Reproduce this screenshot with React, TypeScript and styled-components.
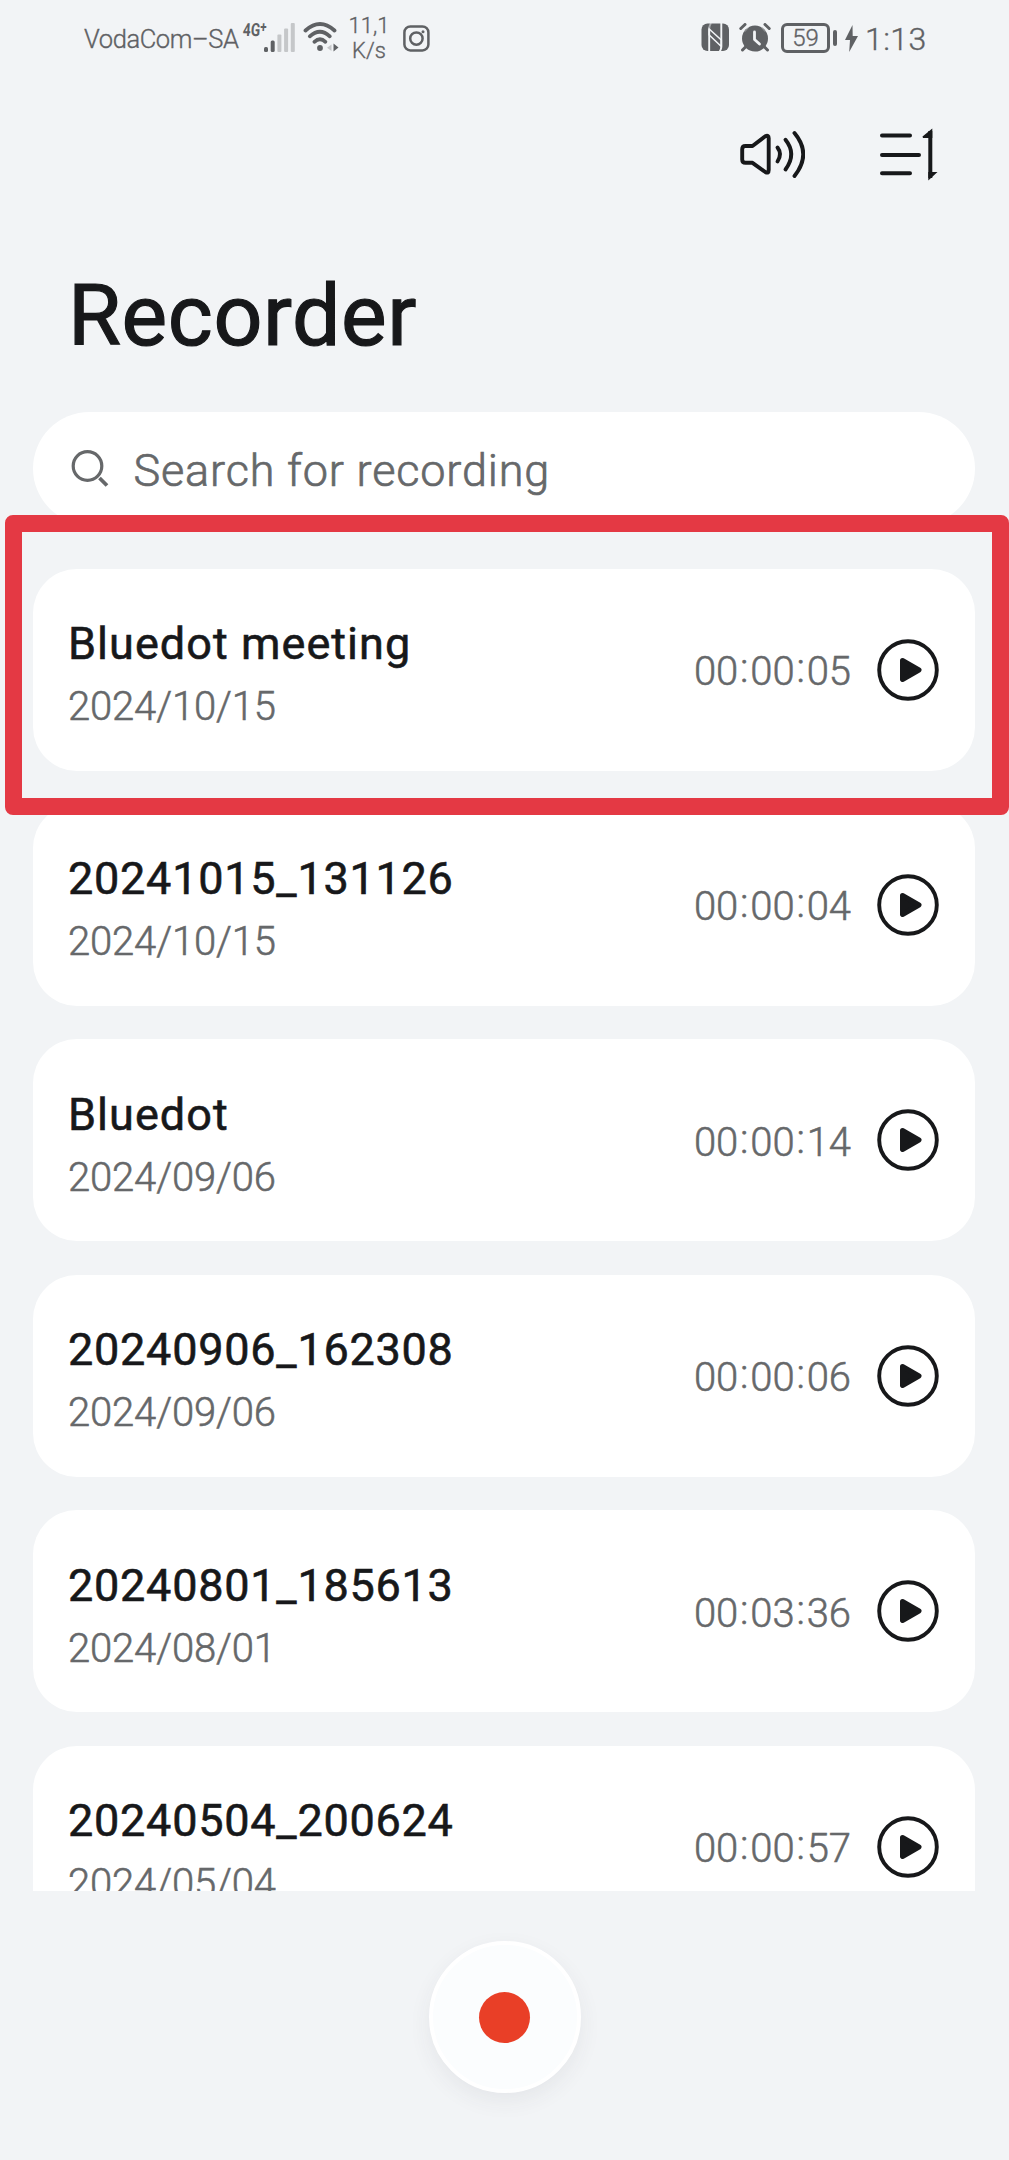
import React from "react";
import styled, { createGlobalStyle } from "styled-components";

const GlobalStyle = createGlobalStyle`
  * { box-sizing: border-box; }
  body {
    margin: 0;
    background: #f2f4f6;
    font-family: Roboto, "Noto Sans", sans-serif;
    color: #17181a;
  }
`;

const Screen = styled.main`
  width: 1009px;
  height: 2160px;
  overflow: hidden;
  display: flex;
  flex-direction: column;
  background: #f2f4f6;
`;

const StatusBar = styled.header`
  height: 76px;
  flex: none;
  display: flex;
  justify-content: space-between;
  padding: 0 82px 0 84px;
  color: #5f6164;
`;

const StatusGroup = styled.div`
  display: flex;
  align-items: flex-start;
`;

const Slot = styled.div<{ $top: number; $width: number; $gap?: number }>`
  flex: none;
  width: ${(p) => p.$width}px;
  margin-top: ${(p) => p.$top}px;
  margin-left: ${(p) => p.$gap ?? 0}px;
  white-space: nowrap;
  svg { display: block; }
`;

const StatusText = styled.span<{ $size: number; $spacing?: number }>`
  display: block;
  font-size: ${(p) => p.$size}px;
  line-height: 1;
  font-weight: 300;
  -webkit-text-stroke: 0.35px currentColor;
  letter-spacing: ${(p) => p.$spacing ?? 0}px;
`;

const Network = styled.span`
  display: inline-block;
  font: 700 18px/1 Roboto, sans-serif;
  transform: scaleX(0.76) skewX(-5deg);
  transform-origin: 0 50%;
`;

const Plus = styled.span`
  font-size: 15px;
  vertical-align: 4px;
`;

const Speed = styled.div`
  display: flex;
  flex-direction: column;
  align-items: center;
  gap: 3px;
`;

const Battery = styled.div`
  width: 49px;
  height: 30px;
  border: 3px solid #5f6164;
  border-radius: 6px;
  display: flex;
  align-items: center;
  justify-content: center;
`;

const Toolbar = styled.nav`
  height: 124px;
  flex: none;
  display: flex;
  justify-content: flex-end;
  align-items: flex-start;
  gap: 74px;
  padding: 52px 70px 0 0;
`;

const IconButton = styled.button`
  padding: 0;
  border: 0;
  background: none;
  display: block;
  svg { display: block; }
`;

const Title = styled.h1`
  height: 212px;
  flex: none;
  margin: 0;
  padding: 66px 0 0 68px;
  font-size: 86px;
  line-height: 100px;
  font-weight: 400;
  -webkit-text-stroke: 1.2px currentColor;
  letter-spacing: 0.6px;
`;

const SearchBox = styled.label`
  flex: none;
  width: 942px;
  height: 113px;
  margin-left: 33px;
  padding: 0 0 0 38px;
  border-radius: 57px;
  background: #fff;
  display: flex;
  align-items: center;
  color: #66686a;
`;

const SearchHint = styled.span`
  margin-left: 24.5px;
  padding-top: 5px;
  font-size: 45px;
  line-height: 54px;
  font-weight: 300;
  -webkit-text-stroke: 0.7px currentColor;
  letter-spacing: 0.83px;
`;

// Starts a little above its first card so the highlight frame can overlap the search box.
const ListViewport = styled.section`
  position: relative;
  height: 1386px;
  flex: none;
  margin-top: -20px;
  padding: 63.6px 34px 0 33px;
  overflow: hidden;
`;

const List = styled.ul`
  list-style: none;
  margin: 0;
  padding: 0;
  display: flex;
  flex-direction: column;
  gap: 33.4px;
`;

const Card = styled.li`
  position: relative;
  height: 202px;
  flex: none;
  display: flex;
  align-items: center;
  padding: 0 36px 0 35px;
  border-radius: 44px;
  background: #fff;
`;

const Highlight = styled.div`
  position: absolute;
  left: -28px;
  top: -54px;
  width: 1004px;
  height: 300px;
  border: 17px solid #e43944;
  border-radius: 8px;
  pointer-events: none;
`;

const CardText = styled.div`
  flex: 1;
  padding-top: 12px;
`;

const Name = styled.div<{ $numeric: boolean }>`
  font-size: 45px;
  line-height: 56px;
  font-weight: 400;
  -webkit-text-stroke: 0.6px currentColor;
  letter-spacing: ${(p) => (p.$numeric ? 0.75 : 1.05)}px;
`;

const DateText = styled.div`
  margin-top: 7px;
  font-size: 40px;
  line-height: 56px;
  font-weight: 300;
  -webkit-text-stroke: 0.55px currentColor;
  letter-spacing: -0.15px;
  color: #66686a;
`;

const Duration = styled.span`
  display: flex;
  width: 160px;
  margin-right: 26px;
  padding-top: 5px;
  justify-content: flex-end;
  font-size: 40px;
  line-height: 48px;
  font-weight: 300;
  -webkit-text-stroke: 0.55px currentColor;
  color: #66686a;
`;

const Colon = styled.span`
  width: 12px;
  text-align: center;
  transform: translateY(-3px);
`;

const Footer = styled.footer`
  flex: 1;
  display: flex;
  justify-content: center;
  padding-top: 50px;
`;

const RecordButton = styled.button`
  width: 152px;
  height: 152px;
  padding: 0;
  border: 4px solid #fff;
  border-radius: 50%;
  background: #fbfdfe;
  box-shadow: 0 8px 22px rgba(50, 60, 70, 0.07);
  display: flex;
  align-items: center;
  justify-content: center;
`;

const RecordDot = styled.span`
  width: 51px;
  height: 51px;
  border-radius: 50%;
  background: #e93f27;
`;

const SignalIcon = () => (
  <svg width="32" height="29" viewBox="0 0 32 29" fill="currentColor">
    <rect x="0" y="24" width="4" height="5" rx="1.5" />
    <rect x="6.7" y="17.5" width="4" height="11.5" rx="1.5" />
    <g opacity="0.3">
      <rect x="13.4" y="11.5" width="4" height="17.5" rx="1" />
      <rect x="20.1" y="5.5" width="4" height="23.5" rx="1" />
      <rect x="26.8" y="0" width="4" height="29" rx="1" />
    </g>
  </svg>
);

const WifiIcon = () => (
  <svg width="36" height="30" viewBox="0 0 36 30" fill="none" stroke="currentColor" strokeWidth="3.8" strokeLinecap="round">
    <path d="M2.500 8.500Q17 -4.500 31.500 8.500" />
    <path d="M6.800 14.300Q17 5 26.800 14.300" />
    <path d="M11.400 19.800Q17 14.800 22.400 19.800" />
    <circle cx="17" cy="26" r="2.900" fill="currentColor" stroke="none" />
    <path d="M28.500 22.500v6.500l-4.500-3.200z" fill="currentColor" stroke="none" opacity="0.3" />
    <path d="M30.500 21.500v8l5-4z" fill="currentColor" stroke="none" />
  </svg>
);

const CameraIcon = () => (
  <svg width="27" height="27" viewBox="0 0 27 27" fill="none" stroke="currentColor" strokeWidth="2.5">
    <rect x="1.4" y="1.4" width="24" height="24" rx="6" />
    <circle cx="13.4" cy="13.6" r="6.2" />
    <circle cx="20" cy="6.8" r="1.5" fill="currentColor" stroke="none" />
  </svg>
);

const NfcIcon = () => (
  <svg width="29" height="29" viewBox="0 0 29 29">
    <rect x="0.5" y="0.5" width="27.5" height="27.5" rx="6" fill="#5f6164" />
    <path d="M8.200 6L20.300 17V23.500L8.200 12Z" fill="#5f6164" stroke="#f2f4f6" strokeWidth="1.600" />
    <g fill="none" stroke="#f2f4f6" strokeWidth="1.900">
      <path d="M8.200 29V6" />
      <path d="M8.200 6C8.200 3 9 1.500 10 0" opacity="0.500" />
      <path d="M20.300 0V23.500C20.300 26 19.500 27.500 18.500 29" />
    </g>
  </svg>
);

const AlarmIcon = () => (
  <svg width="32" height="29" viewBox="0 0 32 29" fill="none" strokeLinecap="round">
    <circle cx="16" cy="15.500" r="13" fill="#5f6164" />
    <path d="M1.800 5.500L6 1.500M30.200 5.500L26 1.500M6.500 24L3.500 27M25.500 24L28.500 27" stroke="#5f6164" strokeWidth="3" />
    <path d="M6 8.500L9.500 4.500M26 8.500L22.500 4.500" stroke="#f2f4f6" strokeWidth="1" opacity="0.400" />
    <path d="M15.500 9V16.500L20.500 21" stroke="#f2f4f6" strokeWidth="2.800" strokeLinejoin="round" />
  </svg>
);

const BoltIcon = () => (
  <svg width="13" height="27" viewBox="0 0 13 27" fill="currentColor">
    <path d="M7.5 0L0 15H5L4.2 27L13 11H7.7Z" />
  </svg>
);

const SpeakerIcon = () => (
  <svg width="66" height="52" viewBox="0 0 66 52" fill="none" stroke="#17181a" strokeWidth="3.9" strokeLinecap="round" strokeLinejoin="round">
    <path d="M6.500 18H13.500L26.300 8.300Q29.700 6.500 29.700 10.300V42Q29.700 46 26.300 44L13.500 34.800H6.500Q3.200 34.800 3.200 31.500V21.300Q3.200 18 6.500 18Z" />
    <path d="M38.500 19.500Q43.500 26 38.500 33.500" />
    <path d="M46.500 11.800Q58 26 46.500 41.500" />
    <path d="M55.500 5Q73 26 55.500 48" />
  </svg>
);

const SortIcon = () => (
  <svg width="60" height="54" viewBox="0 0 60 54" fill="none" stroke="#17181a" strokeWidth="4" strokeLinecap="round">
    <path d="M3 7.500H31M3 27H40M3 45.300H31" />
    <path d="M51.300 3V50" strokeLinecap="butt" />
    <path d="M43.500 8.500L53.300 0.500V10H44ZM49.300 44H58.500L49.300 52.500Z" fill="#17181a" stroke="none" />
  </svg>
);

const SearchIcon = () => (
  <svg width="38" height="42" viewBox="0 0 38 42" fill="none" stroke="currentColor" strokeWidth="3.2">
    <circle cx="16.500" cy="18" r="14.300" />
    <path d="M28.500 30L36 37.500" strokeWidth="3.800" />
  </svg>
);

const PlayIcon = () => (
  <svg width="62" height="62" viewBox="0 0 62 62">
    <circle cx="31" cy="31" r="28.800" fill="none" stroke="#17181a" strokeWidth="3.900" />
    <path d="M25.500 21.500L42 31L25.500 40.500Z" fill="#17181a" stroke="#17181a" strokeWidth="5" strokeLinejoin="round" />
  </svg>
);

type Recording = { name: string; date: string; length: string; highlighted?: boolean };

const recordings: Recording[] = [
  { name: "Bluedot meeting", date: "2024/10/15", length: "00:00:05", highlighted: true },
  { name: "20241015_131126", date: "2024/10/15", length: "00:00:04" },
  { name: "Bluedot", date: "2024/09/06", length: "00:00:14" },
  { name: "20240906_162308", date: "2024/09/06", length: "00:00:06" },
  { name: "20240801_185613", date: "2024/08/01", length: "00:03:36" },
  { name: "20240504_200624", date: "2024/05/04", length: "00:00:57" },
];

// The highlight spills over its neighbours, so its card is raised above them.
const RaisedCard = styled(Card)`
  z-index: 1;
`;

const RecordingRow = ({ item }: { item: Recording }) => {
  const Row = item.highlighted ? RaisedCard : Card;
  return (
    <Row>
      <CardText>
        <Name $numeric={/^\d/.test(item.name)}>{item.name}</Name>
        <DateText>{item.date}</DateText>
      </CardText>
      <Duration>
        {item.length.split(":").map((part, i) => (
          <React.Fragment key={i}>
            {i > 0 && <Colon>:</Colon>}
            <span>{part}</span>
          </React.Fragment>
        ))}
      </Duration>
      <IconButton aria-label="Play"><PlayIcon /></IconButton>
      {item.highlighted && <Highlight />}
    </Row>
  );
};

export default function App() {
  return (
    <>
      <GlobalStyle />
      <Screen>
        <StatusBar>
          <StatusGroup>
            <Slot $top={27} $width={157}><StatusText $size={25.5} $spacing={-0.4}>VodaCom–SA</StatusText></Slot>
            <Slot $top={20} $width={23} $gap={2}><Network>4G<Plus>+</Plus></Network></Slot>
            <Slot $top={23} $width={32} $gap={-2}><SignalIcon /></Slot>
            <Slot $top={22} $width={36} $gap={7}><WifiIcon /></Slot>
            <Slot $top={15} $width={38} $gap={11}>
              <Speed>
                <StatusText $size={22}>11,1</StatusText>
                <StatusText $size={22}>K/s</StatusText>
              </Speed>
            </Slot>
            <Slot $top={25} $width={27} $gap={15}><CameraIcon /></Slot>
          </StatusGroup>
          <StatusGroup>
            <Slot $top={23} $width={29}><NfcIcon /></Slot>
            <Slot $top={23} $width={32} $gap={9}><AlarmIcon /></Slot>
            <Slot $top={23} $width={49} $gap={10}>
              <Battery><StatusText $size={24}>59</StatusText></Battery>
            </Slot>
            <Slot $top={30} $width={4} $gap={3}>
              <svg width="4" height="16" fill="currentColor"><rect width="4" height="16" rx="2" /></svg>
            </Slot>
            <Slot $top={25} $width={13} $gap={8}><BoltIcon /></Slot>
            <Slot $top={23} $width={62} $gap={7}><StatusText $size={32} $spacing={0.4}>1:13</StatusText></Slot>
          </StatusGroup>
        </StatusBar>
        <Toolbar>
          <IconButton aria-label="Speaker"><SpeakerIcon /></IconButton>
          <IconButton aria-label="Sort"><SortIcon /></IconButton>
        </Toolbar>
        <Title>Recorder</Title>
        <SearchBox>
          <SearchIcon />
          <SearchHint>Search for recording</SearchHint>
        </SearchBox>
        <ListViewport>
          <List>
            {recordings.map((item) => (
              <RecordingRow key={item.name} item={item} />
            ))}
          </List>
        </ListViewport>
        <Footer>
          <RecordButton aria-label="Record"><RecordDot /></RecordButton>
        </Footer>
      </Screen>
    </>
  );
}
